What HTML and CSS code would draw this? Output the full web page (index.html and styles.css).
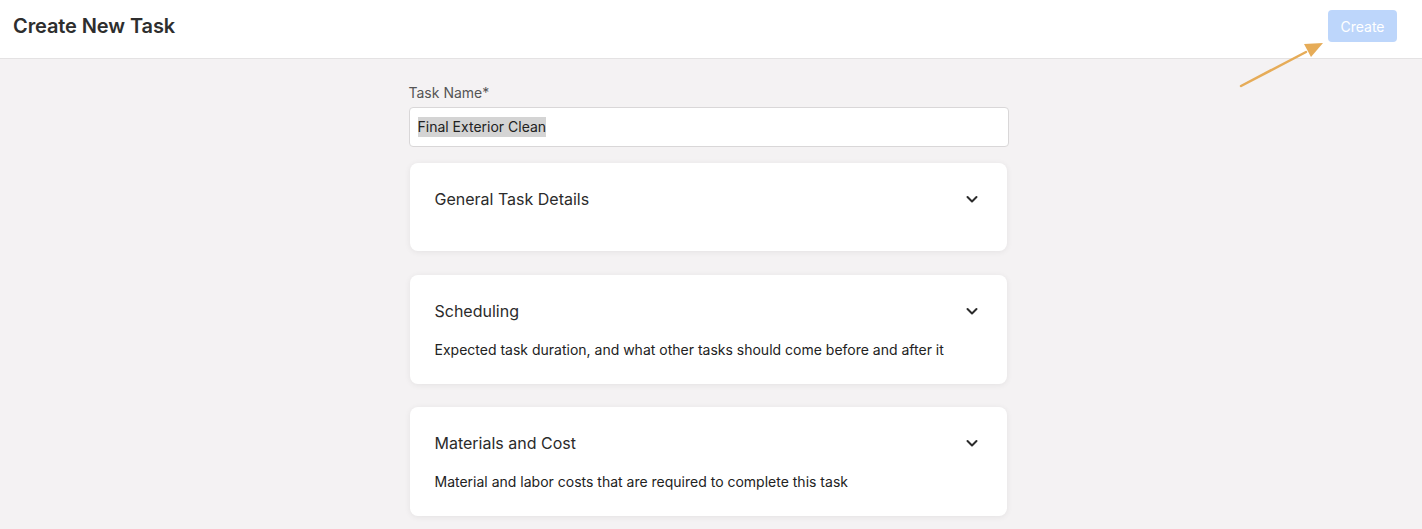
FILE: index.html
```html
<!DOCTYPE html>
<html lang="en">
<head>
  <meta charset="UTF-8">
  <meta name="viewport" content="width=device-width, initial-scale=1.0">
  <title>Create New Task</title>
  <link rel="stylesheet" href="styles.css">
</head>
<body>
  <header class="topbar">
    <h1 class="page-title">Create New Task</h1>
    <button class="create-button" disabled>Create</button>
  </header>

  <main class="page">
    <div class="form">
      <div class="field">
        <label class="field-label" for="task-name">Task Name*</label>
        <div class="text-input" id="task-name"><span class="selected">Final Exterior Clean</span></div>
      </div>

      <section class="card">
        <div class="card-head">
          <h2 class="card-title">General Task Details</h2>
          <svg class="chevron" width="20" height="20" viewBox="0 0 20 20"><path d="M5.5 8l4.5 4.5L14.5 8" fill="none" stroke="#2b2b2b" stroke-width="2" stroke-linecap="round" stroke-linejoin="round"/></svg>
        </div>
        <p class="card-desc"></p>
      </section>

      <section class="card">
        <div class="card-head">
          <h2 class="card-title">Scheduling</h2>
          <svg class="chevron" width="20" height="20" viewBox="0 0 20 20"><path d="M5.5 8l4.5 4.5L14.5 8" fill="none" stroke="#2b2b2b" stroke-width="2" stroke-linecap="round" stroke-linejoin="round"/></svg>
        </div>
        <p class="card-desc">Expected task duration, and what other tasks should come before and after it</p>
      </section>

      <section class="card">
        <div class="card-head">
          <h2 class="card-title">Materials and Cost</h2>
          <svg class="chevron" width="20" height="20" viewBox="0 0 20 20"><path d="M5.5 8l4.5 4.5L14.5 8" fill="none" stroke="#2b2b2b" stroke-width="2" stroke-linecap="round" stroke-linejoin="round"/></svg>
        </div>
        <p class="card-desc">Material and labor costs that are required to complete this task</p>
      </section>
    </div>
  </main>

  <!-- annotation arrow pointing at the Create button -->
  <svg class="pointer" width="100" height="60" viewBox="0 0 100 60">
    <line x1="3" y1="46" x2="68" y2="12" stroke="#e6ac58" stroke-width="2.5" stroke-linecap="round"/>
    <polygon points="85,3 66,4 73,17" fill="#e6ac58"/>
  </svg>
</body>
</html>
```

FILE: styles.css
```css
body {
  font-family: Inter, "Noto Sans", sans-serif;
  background: #f4f2f3;
  color: #2b2b2b;
  margin: 0;
  height: 100vh;
  overflow: hidden;
}

.topbar {
  height: 48px;
  background: #fff;
  border-bottom: 1px solid #e4e2e3;
  display: flex;
  align-items: flex-start;
  justify-content: space-between;
  padding: 10px 25px 0 13px;
}

.page-title {
  margin: 4px 0 0;
  font-size: 20px;
  line-height: 24px;
  font-weight: 600;
  color: #2e2e2e;
  letter-spacing: -0.1px;
}

.create-button {
  background: #bdd6fb;
  color: #fff;
  border: none;
  border-radius: 4px;
  height: 32px;
  width: 69px;
  font-family: inherit;
  font-size: 14px;
}

.page {
  display: flex;
  justify-content: center;
  padding: 24px 5px 0 0;
}

.form {
  width: 600px;
  display: flex;
  flex-direction: column;
}

.field {
  margin-bottom: 16px;
}

.field-label {
  display: block;
  font-size: 14px;
  line-height: 20px;
  color: #555;
  margin-bottom: 4px;
}

.text-input {
  height: 38px;
  border: 1px solid #d9d7d8;
  border-radius: 4px;
  background: #fff;
  display: flex;
  align-items: center;
  padding: 0 8px;
  font-size: 14px;
  color: #222;
}

.selected {
  background: #d4d4d4;
  line-height: 20px;
}

.card {
  background: #fff;
  border-radius: 8px;
  box-shadow: 0 1px 6px rgba(0, 0, 0, 0.07);
  padding: 24px 25px;
  margin: 0 2px 23.5px 1px;
}

.card-head {
  display: flex;
  align-items: center;
  justify-content: space-between;
  height: 24px;
}

.card-title {
  margin: 0;
  font-size: 16px;
  font-weight: 400;
  color: #2b2b2b;
}

.card-desc {
  margin: 17px 0 0;
  font-size: 14px;
  line-height: 20px;
  color: #222;
}

.card-desc:empty {
  margin-top: 16px;
  line-height: 0;
}

.pointer {
  position: absolute;
  left: 1238px;
  top: 40px;
}
```
